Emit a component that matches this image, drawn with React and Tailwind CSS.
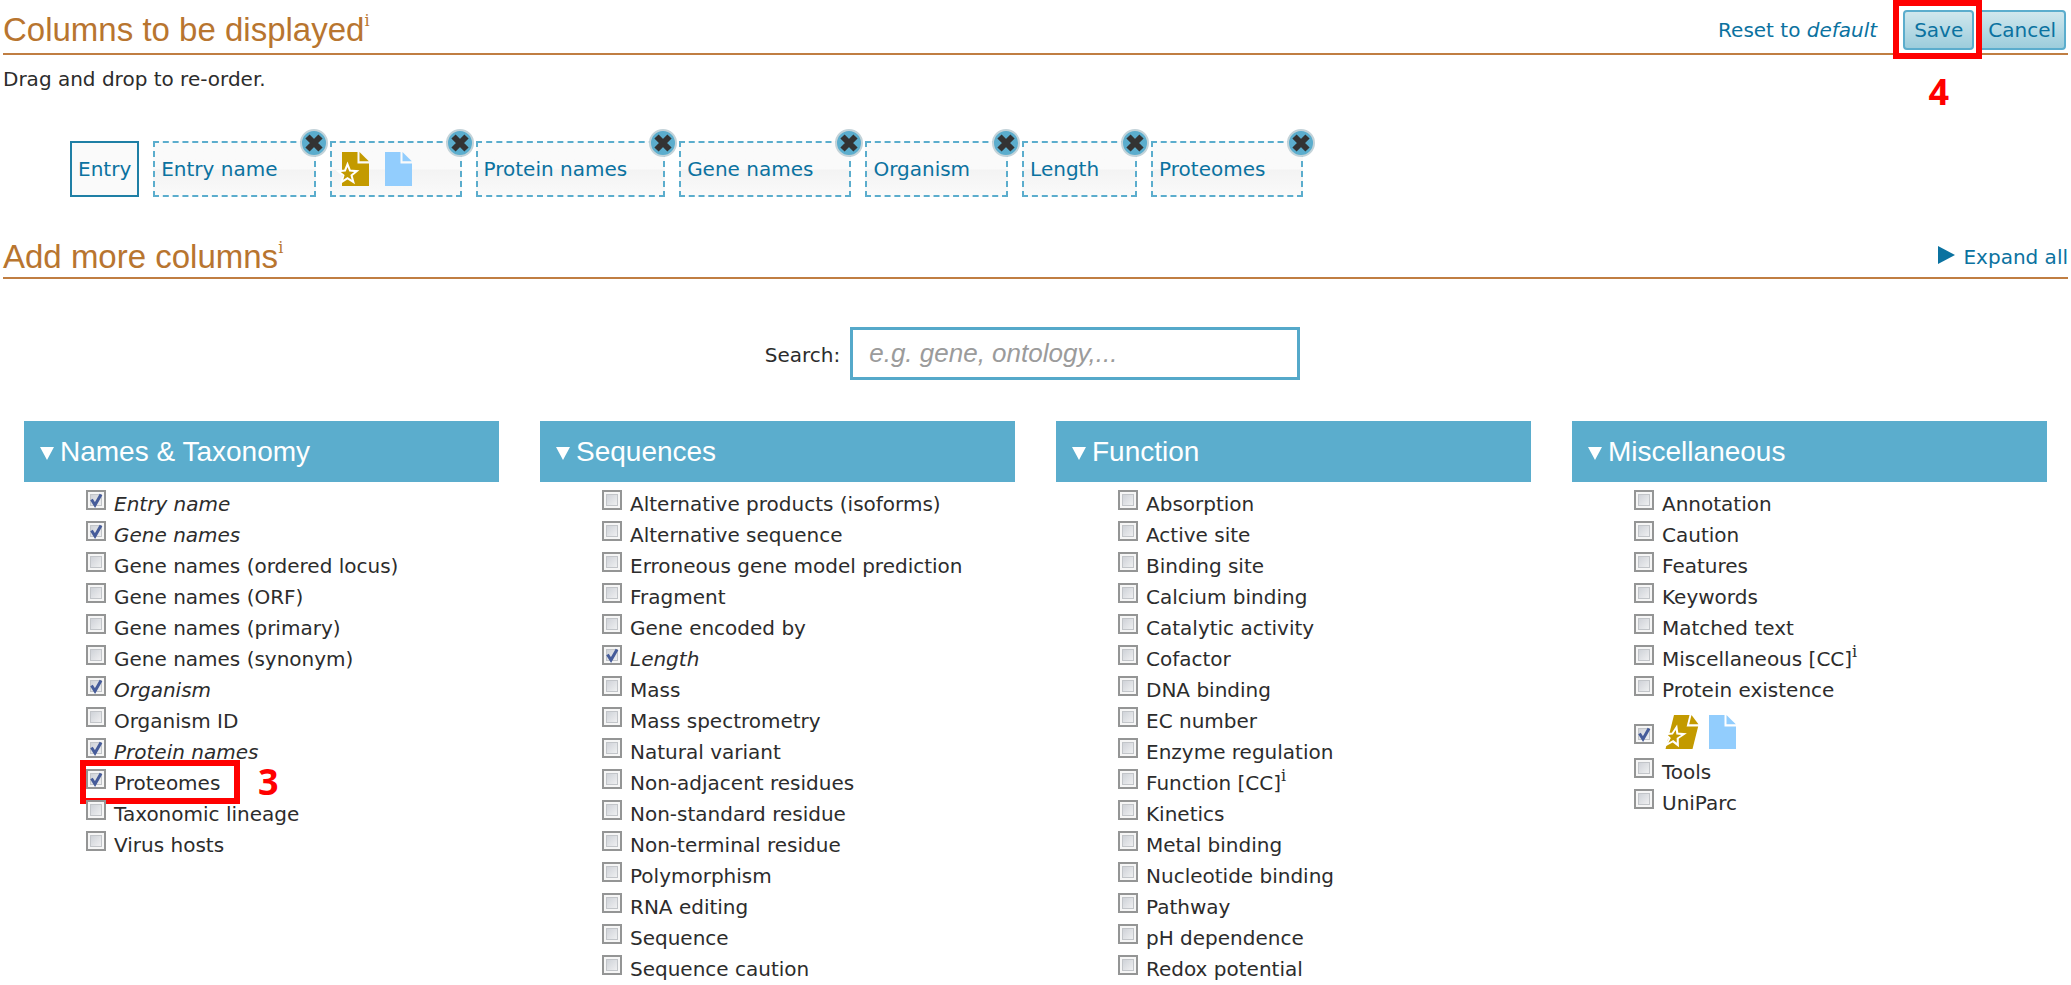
import React, { useState } from "react";

const SELECTED = [
  "Entry name",
  "status",
  "Protein names",
  "Gene names",
  "Organism",
  "Length",
  "Proteomes",
];

const GROUPS = [
  {
    title: "Names & Taxonomy",
    items: [
      { label: "Entry name", checked: true, standard: true },
      { label: "Gene names", checked: true, standard: true },
      { label: "Gene names (ordered locus)" },
      { label: "Gene names (ORF)" },
      { label: "Gene names (primary)" },
      { label: "Gene names (synonym)" },
      { label: "Organism", checked: true, standard: true },
      { label: "Organism ID" },
      { label: "Protein names", checked: true, standard: true },
      { label: "Proteomes", checked: true, step: "3" },
      { label: "Taxonomic lineage" },
      { label: "Virus hosts" },
    ],
  },
  {
    title: "Sequences",
    items: [
      { label: "Alternative products (isoforms)" },
      { label: "Alternative sequence" },
      { label: "Erroneous gene model prediction" },
      { label: "Fragment" },
      { label: "Gene encoded by" },
      { label: "Length", checked: true, standard: true },
      { label: "Mass" },
      { label: "Mass spectrometry" },
      { label: "Natural variant" },
      { label: "Non-adjacent residues" },
      { label: "Non-standard residue" },
      { label: "Non-terminal residue" },
      { label: "Polymorphism" },
      { label: "RNA editing" },
      { label: "Sequence" },
      { label: "Sequence caution" },
    ],
  },
  {
    title: "Function",
    items: [
      { label: "Absorption" },
      { label: "Active site" },
      { label: "Binding site" },
      { label: "Calcium binding" },
      { label: "Catalytic activity" },
      { label: "Cofactor" },
      { label: "DNA binding" },
      { label: "EC number" },
      { label: "Enzyme regulation" },
      { label: "Function [CC]", info: true },
      { label: "Kinetics" },
      { label: "Metal binding" },
      { label: "Nucleotide binding" },
      { label: "Pathway" },
      { label: "pH dependence" },
      { label: "Redox potential" },
    ],
  },
  {
    title: "Miscellaneous",
    items: [
      { label: "Annotation" },
      { label: "Caution" },
      { label: "Features" },
      { label: "Keywords" },
      { label: "Matched text" },
      { label: "Miscellaneous [CC]", info: true },
      { label: "Protein existence" },
      { label: "status", checked: true },
      { label: "Tools" },
      { label: "UniParc" },
    ],
  },
];

function ReviewedIcon({ slanted }) {
  return (
    <svg width="27" height="34" viewBox="0 0 27 34" className="overflow-visible" aria-hidden="true">
      <g transform={slanted ? "translate(8 0) skewX(-14)" : undefined}>
        <path d="M0 0H15.5V11.5H27V34H0Z" fill="#c39a00" />
        <path d="M17.5 0L26.8 9.3H17.5Z" fill="#c39a00" />
        <path
          d="M5.5 15L7.3 19.6L12.2 19.9L8.4 23L9.7 27.8L5.5 25.1L1.3 27.8L2.6 23L-1.2 19.9L3.7 19.6Z"
          fill="#c39a00"
          stroke="#fff"
          strokeWidth="4"
          paintOrder="stroke"
        />
      </g>
    </svg>
  );
}

function UnreviewedIcon() {
  return (
    <svg width="27" height="34" viewBox="0 0 27 34" aria-hidden="true">
      <path d="M0 0H15.5V11.5H27V34H0Z" fill="#92cdfd" />
      <path d="M17.5 0L26.8 9.3H17.5Z" fill="#92cdfd" />
    </svg>
  );
}

function Info({ className }) {
  return (
    <sup className={"top-0 self-start font-['DejaVu_Serif',serif] text-base " + className}>i</sup>
  );
}

function StepMark({ children }) {
  return (
    <span className="font-['Open_Sans',sans-serif] text-4xl font-bold text-[#ff0000]">
      {children}
    </span>
  );
}

function SectionHeader({ title, className, children }) {
  return (
    <header className={"flex items-start justify-between border-b-2 border-[#c07e42] " + className}>
      <h2 className="flex font-['Liberation_Sans',sans-serif] text-[33px] leading-10 text-[#b8752f]">
        {title}
        <Info className="leading-[22px]" />
      </h2>
      {children}
    </header>
  );
}

function SelectedColumn({ name }) {
  return (
    <li className="relative flex h-14 cursor-move items-center border-2 border-dashed border-[#5badcd] bg-linear-to-b from-[#fafafa] from-50% via-[#f3f3f3] via-52% to-[#fafafa] pr-9 pl-1.5">
      {name === "status" ? (
        <span className="flex gap-4 pr-3 pl-1">
          <ReviewedIcon />
          <UnreviewedIcon />
        </span>
      ) : (
        name
      )}
      <button
        type="button"
        aria-label={"Remove " + name}
        className="absolute -top-3.5 -right-3.5 grid size-7 place-items-center rounded-full border-2 border-[#c3d3d9] bg-[#5badcd]"
      >
        <svg width="20" height="20" viewBox="0 0 20 20" aria-hidden="true">
          <path d="M3.5 3.5L16.5 16.5M16.5 3.5L3.5 16.5" stroke="#333" strokeWidth="6" />
        </svg>
      </button>
    </li>
  );
}

function ColumnOption({ item, id }) {
  const [checked, setChecked] = useState(Boolean(item.checked));
  const isStatus = item.label === "status";
  return (
    <li
      className={
        "relative flex " + (isStatus ? "h-[51px] items-center" : "h-[31px] items-start")
      }
    >
      <span className={"grid " + (isStatus ? "mt-1" : "mt-px")}>
        <input
          type="checkbox"
          id={id}
          aria-label={isStatus ? "Status" : undefined}
          checked={checked}
          onChange={(e) => setChecked(e.target.checked)}
          className="peer col-start-1 row-start-1 size-5 appearance-none border-2 border-[#949595] bg-linear-to-br from-[#c6cad1] to-[#f8f8f8] shadow-[inset_0_0_0_2px_#f6f6f6,inset_0_0_0_3px_#c2c5c9]"
        />
        <svg
          width="20"
          height="20"
          viewBox="0 0 20 20"
          aria-hidden="true"
          className="pointer-events-none invisible col-start-1 row-start-1 peer-checked:visible"
        >
          <path
            d="M5.5 9.5L9 15L15 4.5"
            fill="none"
            stroke="#465c9a"
            strokeWidth="3"
          />
        </svg>
      </span>
      <label
        htmlFor={id}
        className={
          "flex pl-2 leading-[31px] whitespace-nowrap " + (item.standard ? "italic" : "")
        }
      >
        {isStatus ? (
          <span className="flex gap-4 pl-1">
            <ReviewedIcon slanted />
            <UnreviewedIcon />
          </span>
        ) : (
          item.label
        )}
        {item.info && <Info className="leading-4" />}
      </label>
      {item.step && (
        <span className="pointer-events-none absolute -top-2 -left-1.5 flex items-center gap-[18px]">
          <span className="h-11 w-40 border-6 border-[#ff0000]" />
          <StepMark>{item.step}</StepMark>
        </span>
      )}
    </li>
  );
}

function ColumnGroup({ group }) {
  const [open, setOpen] = useState(true);
  return (
    <section>
      <h3>
        <button
          type="button"
          aria-expanded={open}
          onClick={() => setOpen(!open)}
          className="flex h-[61px] w-full items-center gap-1.5 bg-[#5badcd] pl-4 text-left font-['Liberation_Sans',sans-serif] text-[28px] text-white"
        >
          <svg width="14" height="13" viewBox="0 0 14 13" className="mt-1" aria-hidden="true">
            <path d="M0 0H14L7 13Z" fill="#fff" />
          </svg>
          {group.title}
        </button>
      </h3>
      {open && (
        <ul className="pt-[7px] pl-[62px]">
          {group.items.map((item) => (
            <ColumnOption key={item.label} item={item} id={group.title + "-" + item.label} />
          ))}
        </ul>
      )}
    </section>
  );
}

export default function App() {
  return (
    <main className="bg-white font-['DejaVu_Sans',sans-serif] text-xl text-[#2c2c2c]">
      <div className="px-[3px]">
        <SectionHeader title="Columns to be displayed" className="pt-2.5 pb-[3px]">
          <div className="flex gap-1 text-[#0b72a0]">
            <a href="#reset" className="mr-[22px] leading-10">
              Reset to <em>default</em>
            </a>
            <div className="relative">
              <button
                type="button"
                className="h-10 rounded-sm border-2 border-[#5badcd] bg-linear-to-b from-[#d0e7ed] to-[#9ccddc] px-[9px]"
              >
                Save
              </button>
              <span className="pointer-events-none absolute -top-2.5 -right-2 -bottom-[9px] -left-2.5 z-10 border-6 border-[#ff0000]" />
              <span className="absolute top-[62px] left-1/2 -translate-x-1/2">
                <StepMark>4</StepMark>
              </span>
            </div>
            <button
              type="button"
              className="mr-0.5 h-10 rounded-sm border-2 border-[#5badcd] bg-linear-to-b from-[#d0e7ed] to-[#9ccddc] px-2"
            >
              Cancel
            </button>
          </div>
        </SectionHeader>
        <p className="mt-[9px] leading-[31px]">Drag and drop to re-order.</p>
        <ul className="mt-[46px] flex gap-3.5 pl-[67px] text-[#0b72a0]">
          <li className="flex h-14 items-center border-2 border-[#1f7fa5] bg-[#fafafa] px-1.5">
            Entry
          </li>
          {SELECTED.map((name) => (
            <SelectedColumn key={name} name={name} />
          ))}
        </ul>
        <SectionHeader title="Add more columns" className="mt-10">
          <button type="button" className="flex items-center gap-2 leading-10 text-[#0b72a0]">
            <svg width="17" height="18" viewBox="0 0 17 18" className="mb-1" aria-hidden="true">
              <path d="M0 0L17 9L0 18Z" fill="#0b72a0" />
            </svg>
            Expand all
          </button>
        </SectionHeader>
      </div>
      <div className="mt-12 flex items-baseline justify-center gap-2.5 pr-1.5">
        <label htmlFor="column-search">Search:</label>
        <input
          id="column-search"
          type="text"
          placeholder="e.g. gene, ontology,..."
          className="h-[53px] w-[450px] border-3 border-[#55a9ca] px-4 font-['Liberation_Sans',sans-serif] text-[26px] outline-none placeholder:text-[#9b9b9b] placeholder:italic"
        />
      </div>
      <div className="mt-[41px] grid grid-cols-4 gap-[41px] px-6">
        {GROUPS.map((group) => (
          <ColumnGroup key={group.title} group={group} />
        ))}
      </div>
    </main>
  );
}
